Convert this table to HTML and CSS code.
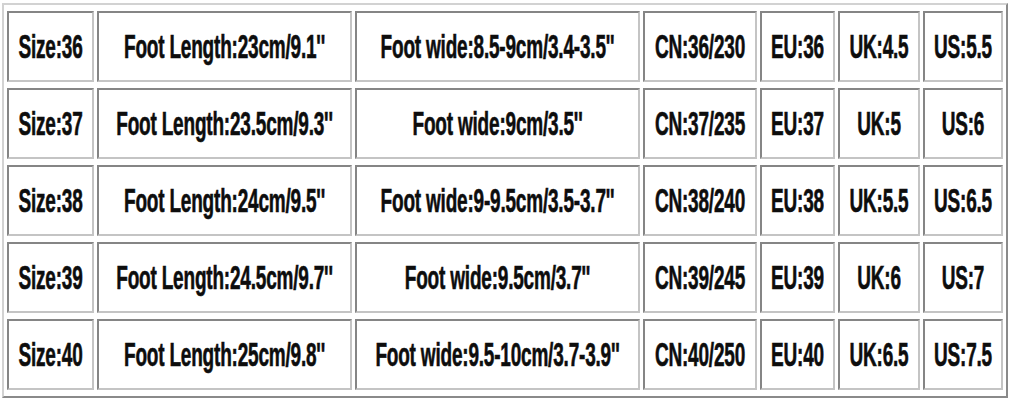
FILE: index.html
```html
<!DOCTYPE html>
<html>
<head>
<meta charset="utf-8">
<link rel="stylesheet" href="styles.css">
</head>
<body>
<table class="size-table">
  <colgroup>
    <col class="c1"><col class="c2"><col class="c3"><col class="c4"><col class="c5"><col class="c6"><col class="c7">
  </colgroup>
  <tr>
    <td><span>Size:36</span></td>
    <td><span>Foot Length:23cm/9.1''</span></td>
    <td><span>Foot wide:8.5-9cm/3.4-3.5''</span></td>
    <td><span>CN:36/230</span></td>
    <td><span>EU:36</span></td>
    <td><span>UK:4.5</span></td>
    <td><span>US:5.5</span></td>
  </tr>
  <tr>
    <td><span>Size:37</span></td>
    <td><span>Foot Length:23.5cm/9.3''</span></td>
    <td><span>Foot wide:9cm/3.5''</span></td>
    <td><span>CN:37/235</span></td>
    <td><span>EU:37</span></td>
    <td><span>UK:5</span></td>
    <td><span>US:6</span></td>
  </tr>
  <tr>
    <td><span>Size:38</span></td>
    <td><span>Foot Length:24cm/9.5''</span></td>
    <td><span>Foot wide:9-9.5cm/3.5-3.7''</span></td>
    <td><span>CN:38/240</span></td>
    <td><span>EU:38</span></td>
    <td><span>UK:5.5</span></td>
    <td><span>US:6.5</span></td>
  </tr>
  <tr>
    <td><span>Size:39</span></td>
    <td><span>Foot Length:24.5cm/9.7''</span></td>
    <td><span>Foot wide:9.5cm/3.7''</span></td>
    <td><span>CN:39/245</span></td>
    <td><span>EU:39</span></td>
    <td><span>UK:6</span></td>
    <td><span>US:7</span></td>
  </tr>
  <tr>
    <td><span>Size:40</span></td>
    <td><span>Foot Length:25cm/9.8''</span></td>
    <td><span>Foot wide:9.5-10cm/3.7-3.9''</span></td>
    <td><span>CN:40/250</span></td>
    <td><span>EU:40</span></td>
    <td><span>UK:6.5</span></td>
    <td><span>US:7.5</span></td>
  </tr>
</table>
</body>
</html>
```
FILE: styles.css
```css
html, body {
  margin: 0;
  padding: 0;
  background: #ffffff;
}

.size-table {
  margin: 3px 0 0 2px;
  width: 1006px;
  box-sizing: border-box;
  table-layout: fixed;
  border-collapse: separate;
  border-spacing: 3px 6.6px;
  border-style: solid;
  border-width: 2px;
  border-color: #d2d2d2 #8a8a8a #8a8a8a #d2d2d2;
  font-family: "Liberation Sans", Arial, sans-serif;
  font-weight: bold;
  color: #0d0d0d;
}

.c1 { width: 87px; }
.c2 { width: 255px; }
.c3 { width: 285px; }
.c4 { width: 114px; }
.c5 { width: 75px; }
.c6 { width: 82px; }
.c7 { width: 80px; }

.size-table td {
  box-sizing: border-box;
  height: 71px;
  padding: 0;
  text-align: center;
  vertical-align: middle;
  white-space: nowrap;
  border-style: solid;
  border-width: 2px;
  border-color: #858585 #c4c4c4 #c4c4c4 #858585;
  font-size: 19px;
  line-height: 20px;
}

.size-table td span {
  display: inline-block;
  transform: scaleY(1.78);
  letter-spacing: -0.2px;
  -webkit-text-stroke: 0.35px #0d0d0d;
}
```
